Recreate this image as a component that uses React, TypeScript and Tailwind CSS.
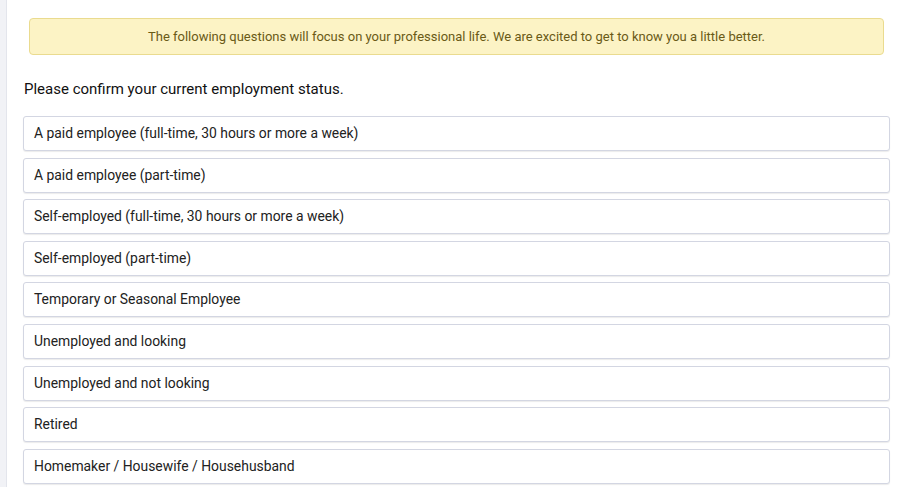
import React from 'react';

const options = [
  'A paid employee (full-time, 30 hours or more a week)',
  'A paid employee (part-time)',
  'Self-employed (full-time, 30 hours or more a week)',
  'Self-employed (part-time)',
  'Temporary or Seasonal Employee',
  'Unemployed and looking',
  'Unemployed and not looking',
  'Retired',
  'Homemaker / Housewife / Househusband',
];

const App: React.FC = () => {
  return (
    <div className="flex h-[487px] overflow-hidden bg-white font-['Roboto',sans-serif]">
      {/* left rail */}
      <div className="w-[7px] shrink-0 bg-[#f1f2f6] border-r border-[#e3e5ec]" />

      <div className="flex-1 pl-[16px] pr-[10px]">
        {/* Info banner */}
        <div className="mx-[6px] mt-[18px] h-[37px] flex items-center justify-center rounded-[4px] border border-[#eadb8f] bg-[#fcf3c5] text-[13px] text-[#6a5a16]">
          The following questions will focus on your professional life. We are excited to get to know you a little better.
        </div>

        <h2 className="mt-[24px] ml-[1px] text-[15px] font-normal text-[#111] leading-[20px]">
          Please confirm your current employment status.
        </h2>

        <div className="mt-[17px] flex flex-col gap-[6.6px]">
          {options.map((opt) => (
            <button
              key={opt}
              type="button"
              className="h-[35px] w-full flex items-center px-[10px] text-left text-[13.9px] text-[#222] bg-white rounded-[3px] border border-[#d3d6e2] shadow-[0_1px_1px_rgba(0,0,0,0.08)]"
            >
              {opt}
            </button>
          ))}
        </div>
      </div>
    </div>
  );
};

export default App;
